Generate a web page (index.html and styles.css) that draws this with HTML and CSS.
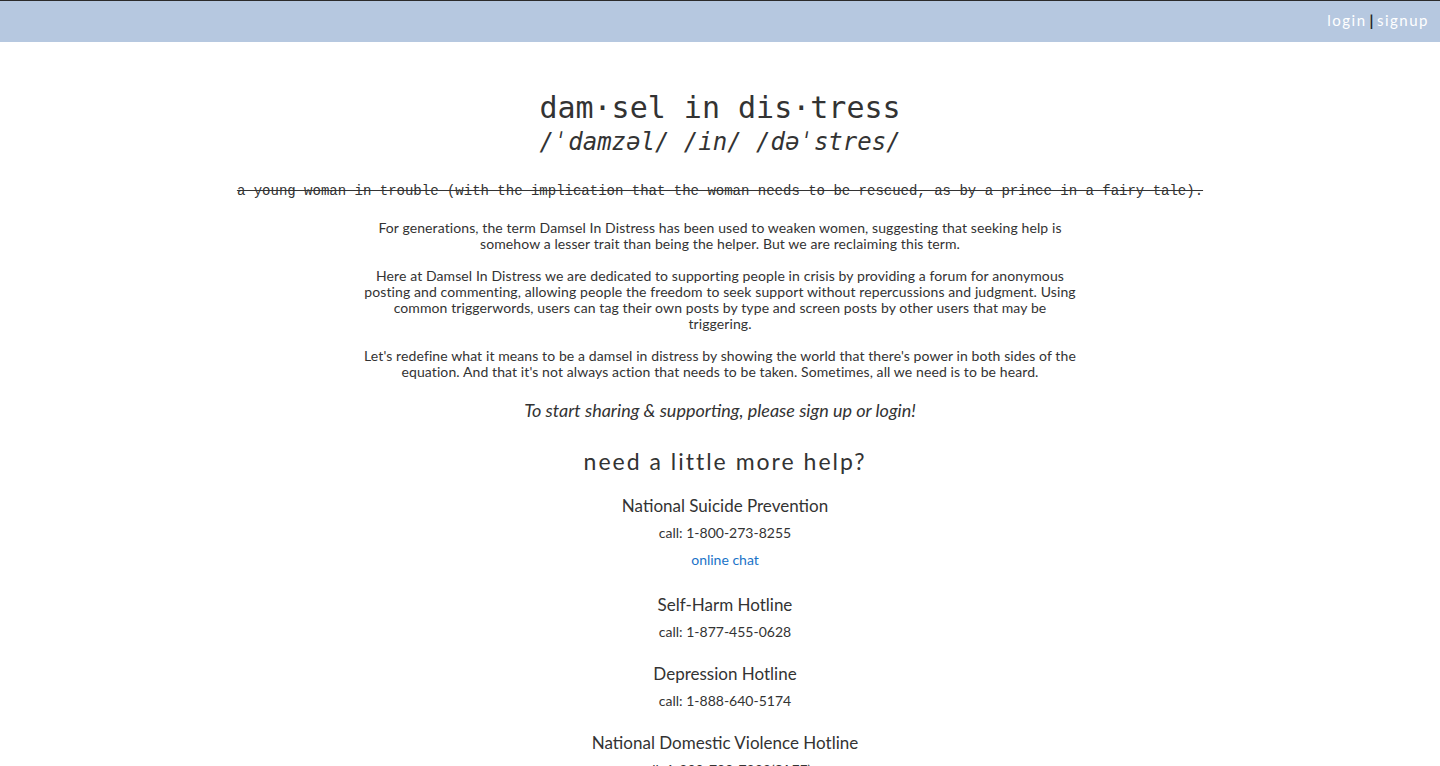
FILE: index.html
```html
<!DOCTYPE html>
<html>
<head>
<meta charset="utf-8">
<link rel="stylesheet" href="styles.css">
</head>
<body>
<header class="topbar">
  <nav class="auth">
    <a class="auth-link" href="#">login</a><span class="sep">|</span><a class="auth-link" href="#">signup</a>
  </nav>
</header>
<main class="page">
  <section class="definition">
    <h1 class="word">dam·sel in dis·tress</h1>
    <p class="phonetic">/ˈdamzəl/ /in/ /dəˈstres/</p>
    <p class="struck">a young woman in trouble (with the implication that the woman needs to be rescued, as by a prince in a fairy tale).</p>
  </section>
  <section class="about">
    <p>For generations, the term Damsel In Distress has been used to weaken women, suggesting that seeking help is somehow a lesser trait than being the helper. But we are reclaiming this term.</p>
    <p>Here at Damsel In Distress we are dedicated to supporting people in crisis by providing a forum for anonymous posting and commenting, allowing people the freedom to seek support without repercussions and judgment. Using common triggerwords, users can tag their own posts by type and screen posts by other users that may be triggering.</p>
    <p>Let's redefine what it means to be a damsel in distress by showing the world that there's power in both sides of the equation. And that it's not always action that needs to be taken. Sometimes, all we need is to be heard.</p>
    <p class="cta">To start sharing &amp; supporting, please sign up or login!</p>
  </section>
  <section class="help">
    <h2 class="help-title">need a little more help?</h2>
    <div class="hotline">
      <h3>National Suicide Prevention</h3>
      <p>call: 1-800-273-8255</p>
      <a class="chat" href="#">online chat</a>
    </div>
    <div class="hotline">
      <h3>Self-Harm Hotline</h3>
      <p>call: 1-877-455-0628</p>
    </div>
    <div class="hotline">
      <h3>Depression Hotline</h3>
      <p>call: 1-888-640-5174</p>
    </div>
    <div class="hotline">
      <h3>National Domestic Violence Hotline</h3>
      <p>call: 1-800-799-7233(SAFE)</p>
    </div>
  </section>
</main>
</body>
</html>
```

FILE: styles.css
```css
html, body {
  margin: 0;
  padding: 0;
  background: #fff;
}
body {
  font-family: Lato, "Noto Sans", sans-serif;
  color: #333;
  border-top: 1px solid #2b2b2b;
  overflow: hidden;
  height: 765px;
}
.topbar {
  height: 41px;
  background: #b6c8e0;
  display: flex;
  justify-content: flex-end;
  align-items: center;
  padding-right: 11px;
}
.auth {
  font-size: 15px;
  letter-spacing: 1.5px;
  margin-top: -4px;
}
.auth-link {
  color: #fff;
  text-decoration: none;
}
.sep {
  color: #222;
  font-weight: bold;
  margin: 0 2px 0 3px;
}
.page {
  display: flex;
  flex-direction: column;
  align-items: center;
}
.definition {
  text-align: center;
  padding-top: 48px;
}
.word {
  font-family: "DejaVu Sans Mono", monospace;
  font-weight: normal;
  font-size: 30px;
  line-height: 36px;
  margin: 0;
}
.phonetic {
  font-family: "DejaVu Sans Mono", monospace;
  font-style: italic;
  font-size: 24px;
  line-height: 33px;
  margin: 0;
}
.struck {
  font-family: "Liberation Mono", monospace;
  font-size: 14px;
  line-height: 16px;
  text-decoration: line-through;
  margin: 24px 0 0;
}
.about {
  width: 714px;
  text-align: center;
  font-size: 14px;
  letter-spacing: 0.1px;
  line-height: 16px;
  margin-top: 21px;
}
.about p {
  margin: 0 0 16px;
}
.about .cta {
  font-style: italic;
  font-size: 18px;
  letter-spacing: 0;
  line-height: 22px;
  margin-top: 19px;
}
.help {
  text-align: center;
  padding-left: 10px;
}
.help-title {
  font-weight: normal;
  font-size: 23px;
  letter-spacing: 2px;
  line-height: 28px;
  margin: 10px 0 20px;
}
.hotline {
  margin-bottom: 21px;
}
.hotline h3 {
  font-weight: normal;
  font-size: 17px;
  line-height: 22px;
  margin: 0;
}
.hotline p {
  font-size: 14px;
  line-height: 20px;
  margin: 6px 0 0;
}
.chat {
  display: block;
  color: #1a73c8;
  font-size: 14px;
  line-height: 20px;
  margin-top: 7px;
  padding-bottom: 3px;
  text-decoration: none;
}
```
